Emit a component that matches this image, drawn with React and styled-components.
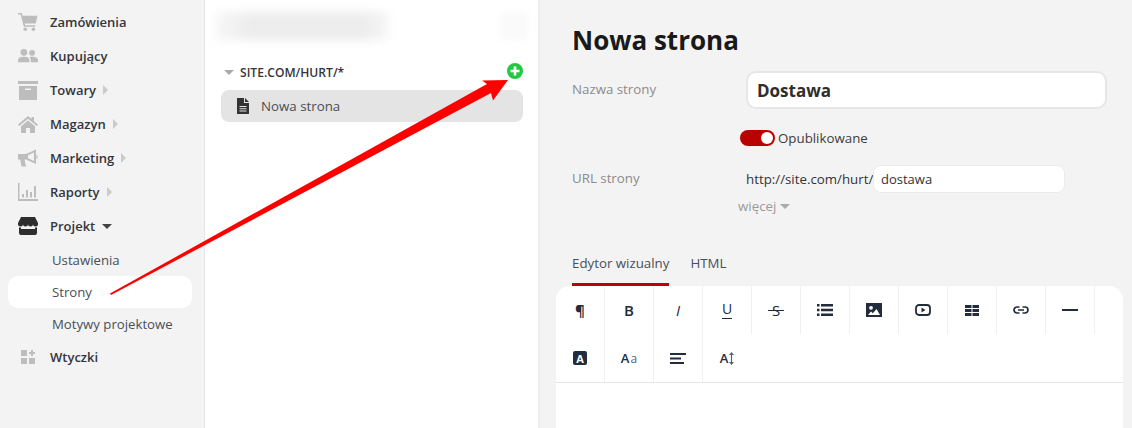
import styled, { createGlobalStyle } from 'styled-components';

const GlobalStyle = createGlobalStyle`
  html, body {
    margin: 0;
    padding: 0;
    background: #f3f3f3;
  }
`;

const Cart = () => (
  <svg width="22" height="20" viewBox="0 0 22 20" fill="#bdbdbd">
    <path d="M0 0h4.200l1 3H21.500l-2 8.600H7.400l.5 2h11v1.600H6.400L3 1.700H0z" />
    <circle cx="8" cy="18" r="2" />
    <circle cx="17" cy="18" r="2" />
  </svg>
);

const Users = () => (
  <svg width="22" height="16" viewBox="0 0 22 16" fill="#bdbdbd">
    <circle cx="6.500" cy="4" r="3.700" />
    <circle cx="15.500" cy="4.500" r="3.200" />
    <path d="M0 15v-2.500C0 10 2.500 8.800 6.500 8.800S12.500 10 12.500 12.500V15z" />
    <path d="M14 15v-2.500c0-1.400-.5-2.500-1.400-3.200.8-.3 1.800-.5 3-.5 3.800 0 6.400 1.200 6.400 3.700V15z" />
  </svg>
);

const Box = () => (
  <svg width="20" height="19" viewBox="0 0 20 19" fill="#bdbdbd">
    <path d="M0 0h20v3H0z" />
    <path d="M1 5h18v14H1zM7 7.500v1.500h6V7.500z" fillRule="evenodd" />
  </svg>
);

const House = () => (
  <svg width="20" height="17" viewBox="0 0 20 17" fill="#bdbdbd">
    <path d="M10 0l3.500 3V1h2.500v4.200L20 8.600l-1.200 1.300L10 2.700 1.200 9.900 0 8.600z" />
    <path d="M10 4.500l7 5.700V17h-5v-5H8v5H3v-6.800z" />
  </svg>
);

const Megaphone = () => (
  <svg width="20" height="18" viewBox="0 0 20 18" fill="#bdbdbd">
    <path
      d="M0 5h8L18 .5V15L8 10.500H6.500L8 17.500H3.500L2.200 10.500H0zM10 6.200v3.100l6 2.600V3.600z"
      fillRule="evenodd"
    />
    <path d="M18.500 5.500c1.600.4 1.600 4 0 4.400z" />
  </svg>
);

const Bars = () => (
  <svg width="20" height="18" viewBox="0 0 20 18" fill="#bdbdbd">
    <path d="M0 0h1.500v16H20v2H0z" />
    <path d="M4 11h2v3.500H4zM8 7h2v7.500H8zM12 9h2v5.500h-2zM16 3h2v11.500h-2z" />
  </svg>
);

const Store = () => (
  <svg width="20" height="18" viewBox="0 0 20 18" fill="#2e2e2e">
    <path d="M3 0h14l3 6v1a2.500 2.500 0 0 1-5 0 2.500 2.500 0 0 1-5 0 2.500 2.500 0 0 1-5 0 2.500 2.500 0 0 1-5 0V6z" />
    <path d="M1 10.500h2V12h14v-1.500h2V16a2 2 0 0 1-2 2H3a2 2 0 0 1-2-2z" />
  </svg>
);

const Plugins = () => (
  <svg width="14" height="14" viewBox="0 0 14 14" fill="#bdbdbd">
    <path d="M0 0h6v6H0zM0 8h6v6H0zM8 8h6v6H8zM10 0h2v2h2v2h-2v2h-2V4H8V2h2z" />
  </svg>
);

const Doc = () => (
  <svg width="12" height="16" viewBox="0 0 12 16" fill="#333">
    <path d="M0 0h7v5h5v11H0zM2.500 8v1h7V8zM2.500 10.200v1h7v-1zM2.500 12.400v1h7v-1z" fillRule="evenodd" />
    <path d="M8 0l4 4H8z" />
  </svg>
);

const Plus = () => (
  <svg width="16" height="16" viewBox="0 0 16 16">
    <circle cx="8" cy="8" r="8" fill="#22c940" />
    <path d="M6.700 3.500h2.600v3.200h3.200v2.600H9.300v3.200H6.700V9.300H3.500V6.700h3.200z" fill="#fff" />
  </svg>
);

const ICON = '#222c3c';

const toolIcons = {
  list: (
    <svg width="16" height="12" viewBox="0 0 16 12" fill={ICON}>
      <path d="M0 0h2.500v2.500H0zM4 0h12v2.500H4zM0 4.700h2.500v2.500H0zM4 4.700h12v2.500H4zM0 9.400h2.500v2.500H0zM4 9.400h12v2.500H4z" />
    </svg>
  ),
  image: (
    <svg width="16" height="14" viewBox="0 0 16 14">
      <path d="M0 0h16v14H0z" fill={ICON} />
      <circle cx="5" cy="4.800" r="1.900" fill="#fff" />
      <path d="M2 12l3-3.500 1.800 1.800L10.500 6l3.500 6z" fill="#fff" />
    </svg>
  ),
  video: (
    <svg width="16" height="12" viewBox="0 0 16 12">
      <rect x="1" y="1" width="14" height="10" rx="3" fill="none" stroke={ICON} strokeWidth="1.800" />
      <path d="M6.500 3.500l4 2.500-4 2.500z" fill={ICON} />
    </svg>
  ),
  table: (
    <svg width="14" height="11" viewBox="0 0 14 11" fill={ICON}>
      <path d="M0 0h6.500v3H0zM7.500 0H14v3H7.500zM0 4h6.500v3H0zM7.500 4H14v3H7.500zM0 8h6.500v3H0zM7.500 8H14v3H7.500z" />
    </svg>
  ),
  link: (
    <svg width="16" height="8" viewBox="0 0 16 8" fill="none" stroke={ICON} strokeWidth="1.700">
      <path d="M6.500 1H4a3 3 0 0 0 0 6h2.500M9.500 1H12a3 3 0 0 1 0 6H9.500M5 4h6" />
    </svg>
  ),
  line: (
    <svg width="16" height="2" viewBox="0 0 16 2" fill={ICON}>
      <path d="M0 0h16v2H0z" />
    </svg>
  ),
  align: (
    <svg width="16" height="11" viewBox="0 0 16 11" fill={ICON}>
      <path d="M0 0h16v2H0zM0 4.500h11v2H0zM0 9h14v2H0z" />
    </svg>
  ),
  height: (
    <svg width="5" height="13" viewBox="0 0 5 13" fill="#5a6270">
      <path d="M2.500 0L5 3H3.100v7H5l-2.500 3L0 10h1.900V3H0z" />
    </svg>
  ),
};

const menu = [
  { label: 'Zamówienia', icon: <Cart /> },
  { label: 'Kupujący', icon: <Users /> },
  { label: 'Towary', icon: <Box />, arrow: true },
  { label: 'Magazyn', icon: <House />, arrow: true },
  { label: 'Marketing', icon: <Megaphone />, arrow: true },
  { label: 'Raporty', icon: <Bars />, arrow: true },
];

export default function App() {
  return (
    <Page>
      <GlobalStyle />
      <Sidebar>
        {menu.map((item) => (
          <MenuItem key={item.label}>
            <MenuIcon>{item.icon}</MenuIcon>
            {item.label}
            {item.arrow && <RightCaret />}
          </MenuItem>
        ))}
        <MenuItem>
          <MenuIcon><Store /></MenuIcon>
          Projekt
          <DownCaret $dark />
        </MenuItem>
        <SubMenu>
          <SubItem>Ustawienia</SubItem>
          <SubItem $active>Strony</SubItem>
          <SubItem>Motywy projektowe</SubItem>
        </SubMenu>
        <MenuItem>
          <MenuIcon><Plugins /></MenuIcon>
          Wtyczki
        </MenuItem>
      </Sidebar>

      <Tree>
        <BlurRow>
          <BlurName />
          <BlurAction />
        </BlurRow>
        <TreeHead>
          <DownCaret />
          <TreeTitle>SITE.COM/HURT/*</TreeTitle>
          <AddButton><Plus /></AddButton>
        </TreeHead>
        <TreeRow>
          <Doc />
          Nowa strona
        </TreeRow>
      </Tree>

      <Content>
        <Title>Nowa strona</Title>
        <NameRow>
          <Label>Nazwa strony</Label>
          <NameInput>Dostawa</NameInput>
        </NameRow>
        <PublishRow>
          <Toggle />
          Opublikowane
        </PublishRow>
        <UrlRow>
          <Label>URL strony</Label>
          <UrlPrefix>http://site.com/hurt/</UrlPrefix>
          <UrlInput>dostawa</UrlInput>
        </UrlRow>
        <More>
          więcej
          <DownCaret />
        </More>
        <Tabs>
          <Tab $active>Edytor wizualny</Tab>
          <Tab>HTML</Tab>
        </Tabs>
        <Editor>
          <ToolRow>
            <Tool><Glyph $size="15px" $weight="700">¶</Glyph></Tool>
            <Tool><Glyph $size="15px" $weight="600">B</Glyph></Tool>
            <Tool><Glyph $size="15px" $italic>I</Glyph></Tool>
            <Tool><Underlined>U</Underlined></Tool>
            <Tool><Struck>S</Struck></Tool>
            <Tool>{toolIcons.list}</Tool>
            <Tool>{toolIcons.image}</Tool>
            <Tool>{toolIcons.video}</Tool>
            <Tool>{toolIcons.table}</Tool>
            <Tool>{toolIcons.link}</Tool>
            <Tool>{toolIcons.line}</Tool>
          </ToolRow>
          <ToolRow $last>
            <Tool><FontBadge>A</FontBadge></Tool>
            <Tool>
              <Glyph $size="13px" $weight="600">A</Glyph>
              <Glyph $size="12px" $light>a</Glyph>
            </Tool>
            <Tool>{toolIcons.align}</Tool>
            <Tool $plain>
              <Glyph $size="13px" $weight="600">A</Glyph>
              {toolIcons.height}
            </Tool>
          </ToolRow>
        </Editor>
      </Content>

      <Arrow width="1132" height="428" viewBox="0 0 1132 428">
        <polygon
          points="110,293.500 487,84 482,80.500 508,80 493,100.500 491,93 111,295"
          fill="#fe0000"
        />
      </Arrow>
    </Page>
  );
}

const Page = styled.div`
  position: relative;
  display: flex;
  width: 1132px;
  height: 428px;
  overflow: hidden;
  background: #f3f3f3;
  font-family: 'Open Sans', 'Noto Sans', sans-serif;
  font-size: 13.3px;
  color: #333;
`;

const Sidebar = styled.nav`
  width: 204px;
  padding-top: 5px;
  box-sizing: content-box;
  border-right: 1px solid #e6e6e6;
`;

const MenuItem = styled.div`
  display: flex;
  align-items: center;
  height: 34px;
  padding-left: 18px;
  font-size: 13px;
  font-weight: 600;
  color: #33363c;
`;

const MenuIcon = styled.span`
  display: flex;
  justify-content: center;
  width: 20px;
  margin-right: 12px;
`;

const RightCaret = styled.span`
  margin-left: 7px;
  border-left: 5px solid #cbcbcb;
  border-top: 5px solid transparent;
  border-bottom: 5px solid transparent;
`;

const DownCaret = styled.span`
  display: inline-block;
  margin-left: ${(p) => (p.$dark ? '7px' : '4px')};
  border-top: 5px solid ${(p) => (p.$dark ? '#444' : '#aaa')};
  border-left: 5px solid transparent;
  border-right: 5px solid transparent;
`;

const SubMenu = styled.div`
  margin-top: 1px;
`;

const SubItem = styled.div`
  display: flex;
  align-items: center;
  height: 32px;
  margin: 0 12px 0 8px;
  padding-left: 44px;
  border-radius: 10px;
  color: #4a4f57;
  font-size: 13.2px;
  background: ${(p) => (p.$active ? '#fff' : 'transparent')};
`;

const Tree = styled.section`
  display: flex;
  flex-direction: column;
  width: 333px;
  background: #fff;
  border-right: 2px solid #eee;
  box-sizing: content-box;
`;

const BlurRow = styled.div`
  display: flex;
  justify-content: space-between;
  height: 28px;
  margin: 12px 10px 0;
`;

const BlurName = styled.div`
  width: 175px;
  background: linear-gradient(90deg, #f8f8f8, #ececec 20%, #ececec 85%, #f8f8f8);
  filter: blur(5px);
`;

const BlurAction = styled.div`
  width: 28px;
  background: #fafafa;
  filter: blur(3px);
`;

const TreeHead = styled.div`
  display: flex;
  align-items: center;
  height: 20px;
  margin: 22px 15px 8px 15px;
  color: #aaa;
`;

const TreeTitle = styled.span`
  margin-left: 6px;
  font-weight: 600;
  font-size: 12.1px;
  color: #33363c;
`;

const AddButton = styled.span`
  display: flex;
  margin-left: auto;
  margin-top: -2px;
`;

const TreeRow = styled.div`
  display: flex;
  align-items: center;
  gap: 12px;
  height: 32px;
  margin: 0 15px 0 16px;
  padding-left: 16px;
  border-radius: 8px;
  background: #e4e4e4;
  color: #4a4f57;
`;

const Content = styled.main`
  flex: 1;
  padding: 0 9px 0 16px;
`;

const Title = styled.h1`
  margin: 24px 0 0 16px;
  height: 32px;
  line-height: 32px;
  font-size: 26px;
  font-weight: 700;
  color: #191919;
`;

const NameRow = styled.div`
  display: flex;
  align-items: center;
  margin: 15px 0 0 16px;
`;

const Label = styled.span`
  width: 174px;
  flex: none;
  padding-bottom: 2px;
  color: #8c8c8c;
`;

const NameInput = styled.div`
  display: flex;
  align-items: center;
  box-sizing: border-box;
  width: 361px;
  height: 38px;
  padding-left: 9px;
  border: 2px solid #e6e6e6;
  border-radius: 10px;
  background: #fff;
  font-size: 17px;
  font-weight: 700;
  color: #2e2e2e;
`;

const PublishRow = styled.div`
  display: flex;
  align-items: center;
  gap: 3px;
  height: 16px;
  margin: 21px 0 0 184px;
  color: #3c3c3c;
`;

const Toggle = styled.span`
  position: relative;
  width: 35px;
  height: 16px;
  border-radius: 8px;
  background: #bb0000;

  &::after {
    content: '';
    position: absolute;
    top: 2px;
    right: 2px;
    width: 12px;
    height: 12px;
    border-radius: 50%;
    background: #fff;
  }
`;

const UrlRow = styled.div`
  display: flex;
  align-items: center;
  margin: 19px 0 0 16px;
`;

const UrlPrefix = styled.span`
  width: 127px;
  flex: none;
  padding-bottom: 1px;
  color: #333;
`;

const UrlInput = styled.div`
  display: flex;
  align-items: center;
  box-sizing: border-box;
  width: 192px;
  height: 28px;
  padding-left: 7px;
  border: 1px solid #ebebeb;
  border-radius: 8px;
  background: #fff;
  color: #333;
  font-size: 13px;
`;

const More = styled.div`
  display: flex;
  align-items: center;
  height: 18px;
  margin: 4px 0 0 182px;
  color: #9a9a9a;
`;

const Tabs = styled.div`
  display: flex;
  gap: 21px;
  margin: 38px 0 0 16px;
`;

const Tab = styled.span`
  height: 30px;
  line-height: 21px;
  border-bottom: 3px solid ${(p) => (p.$active ? '#bb0000' : 'transparent')};
  color: #4a4f57;
`;

const Editor = styled.div`
  height: 142px;
  border-radius: 14px 14px 0 0;
  background: #fff;
`;

const ToolRow = styled.div`
  display: flex;
  height: 48px;
  border-bottom: ${(p) => (p.$last ? '1px solid #e6e6e6' : 'none')};
`;

const Tool = styled.div`
  display: flex;
  align-items: center;
  justify-content: center;
  gap: 1px;
  box-sizing: content-box;
  width: 48px;
  border-right: ${(p) => (p.$plain ? 'none' : '1px solid #f0f0f0')};
`;

const Glyph = styled.span`
  font-size: ${(p) => p.$size};
  font-weight: ${(p) => p.$weight || 400};
  font-style: ${(p) => (p.$italic ? 'italic' : 'normal')};
  color: ${(p) => (p.$light ? '#5a6270' : ICON)};
`;

const Underlined = styled.span`
  padding-bottom: 1px;
  border-bottom: 1px solid ${ICON};
  font-size: 14px;
  line-height: 16px;
  color: ${ICON};
`;

const Struck = styled.span`
  position: relative;
  font-size: 15px;
  color: ${ICON};

  &::after {
    content: '';
    position: absolute;
    top: 50%;
    left: -4px;
    right: -4px;
    height: 1px;
    background: ${ICON};
  }
`;

const FontBadge = styled.span`
  display: flex;
  align-items: center;
  justify-content: center;
  width: 14px;
  height: 14px;
  border-radius: 2px;
  background: ${ICON};
  color: #fff;
  font-size: 11px;
  font-weight: 700;
`;

const Arrow = styled.svg`
  position: absolute;
  top: 0;
  left: 0;
  pointer-events: none;
`;
